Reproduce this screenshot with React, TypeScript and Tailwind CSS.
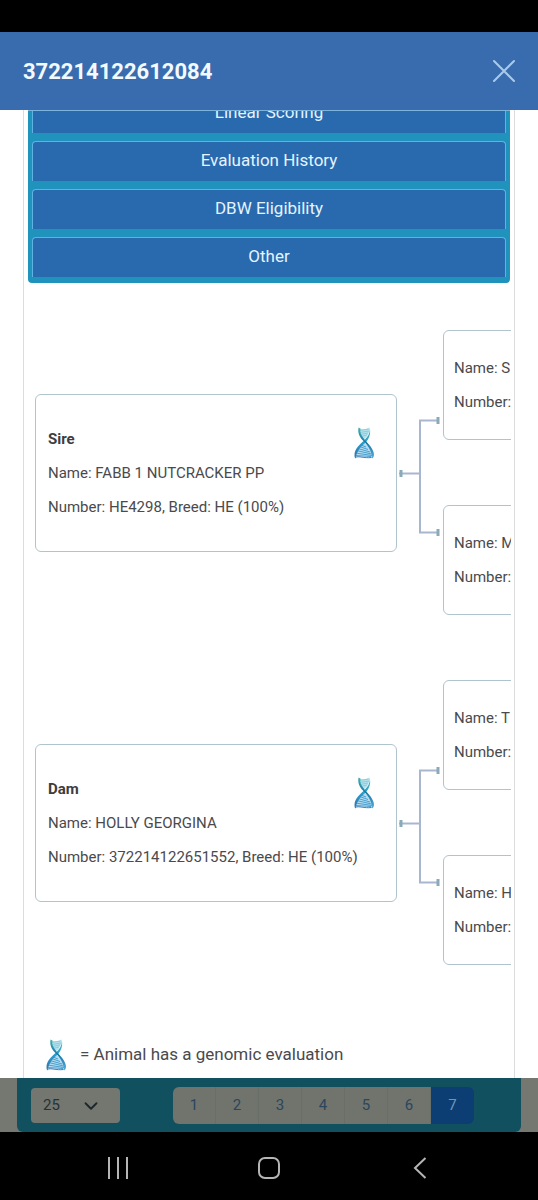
import { ChevronDown } from "lucide-react";

const menuItems = ["Linear Scoring", "Evaluation History", "DBW Eligibility", "Other"];
const pages = [1, 2, 3, 4, 5, 6, 7];

const families = [
  {
    role: "Sire",
    name: "FABB 1 NUTCRACKER PP",
    number: "HE4298, Breed: HE (100%)",
    parents: ["S", "M"],
  },
  {
    role: "Dam",
    name: "HOLLY GEORGINA",
    number: "372214122651552, Breed: HE (100%)",
    parents: ["T", "H"],
  },
];

function DnaIcon() {
  return (
    <svg width="22" height="34" viewBox="0 0 22 34" fill="none" className="shrink-0" aria-hidden="true">
      <defs>
        <linearGradient id="strandA" x1="0" y1="0" x2="0" y2="34" gradientUnits="userSpaceOnUse">
          <stop offset="0" stopColor="#5cc0bd" />
          <stop offset="0.5" stopColor="#2b9ccb" />
          <stop offset="1" stopColor="#2f6ea8" />
        </linearGradient>
        <linearGradient id="strandB" x1="0" y1="0" x2="0" y2="34" gradientUnits="userSpaceOnUse">
          <stop offset="0" stopColor="#4fb5ae" />
          <stop offset="0.5" stopColor="#1677a8" />
          <stop offset="1" stopColor="#5fb4e0" />
        </linearGradient>
      </defs>
      <path d="M6 2.5C5.5 7 7 10.5 11 13.5C15 10 17 6 16.5 1.5C13 3.5 9 4 6 2.5Z" fill="#b5e2ec" />
      <path d="M11 16.5C6 20 3 25 2.5 31.5C8 29.5 13 30 19 31.5C18.5 25 16 20.5 11 16.5Z" fill="#b3dcf1" />
      <path d="M6 4.5 15.5 3M6.5 6.5 16 5M7 8.5 15 7M8 10.5 14 9" stroke="#7cc8dc" strokeWidth="0.8" />
      <path
        d="M8 19 13 21M6.5 20.5 15 23.5M5 22.5 17 26M3.5 24.5 18.5 28M2.5 27 19 29.5M2 29.5 18 30.5"
        stroke="#3f97cb"
        strokeWidth="0.9"
      />
      <path
        d="M16.5 1C17.5 6 15.5 10 11.5 14C6.5 18.5 1.5 23 1.5 29C1.5 31 1.8 32 2.5 32.5C3.5 27 6 22 11.5 17.5C16 13.5 18.5 7.5 16.5 1Z"
        fill="url(#strandA)"
      />
      <path
        d="M5.5 1.5C4.5 7 6.5 11 10 14.5C14.5 19 18.5 24 19 32.5C21 31.5 21.5 29 20.5 26C19 21 14.5 17 11.5 13.5C8 9.5 6.5 6 7.5 2.5Z"
        fill="url(#strandB)"
      />
      <path d="M2 31.5C6 29.5 11 32.5 18.5 31.5" stroke="#3f7fb5" strokeWidth="1" />
    </svg>
  );
}

function Connector() {
  return (
    <svg width="46" height="285" viewBox="0 0 46 285" fill="none" className="shrink-0" aria-hidden="true">
      <path d="M2 143.5H23M41 90.5H23V202.5H41" stroke="#a9b6d0" strokeWidth="2" />
      <path d="M4 140V147M41 87V94M41 199V206" stroke="#8aa9b9" strokeWidth="3" />
    </svg>
  );
}

export default function App() {
  return (
    <div className="flex min-h-screen flex-col bg-white font-['Roboto',sans-serif] text-[15px] text-[#4a4a4d]">
      <div className="h-8 bg-black" />
      <header className="flex h-[78px] items-center justify-between bg-[#396cae] pr-[22px] pl-[23px]">
        <h1 className="text-[22px] font-bold text-[#f2faff]">372214122612084</h1>
        <button type="button" aria-label="Close" className="text-[#a9caec]">
          <svg width="24" height="24" viewBox="0 0 24 24" fill="none" stroke="currentColor" strokeWidth="2" strokeLinecap="round">
            <path d="M2 2 22 22M22 2 2 22" />
          </svg>
        </button>
      </header>

      <main className="mx-[23px] flex-1 border-x border-[#dcdcdc]">
        <nav className="mx-1 flex h-[173px] flex-col justify-end gap-2 overflow-hidden rounded-b-sm border-t border-[#7db4de] bg-[#2093bd] px-1 pb-1.5">
          {menuItems.map((item) => (
            <button
              key={item}
              type="button"
              className="h-10 shrink-0 rounded-t-sm border border-b-0 border-[#5fb2e4] bg-[#2969ae] pb-0.5 text-[17px] text-[#e3f4ff]"
            >
              {item}
            </button>
          ))}
        </nav>

        <section className="mr-[3px] ml-[11px] flex flex-col gap-[65px] overflow-hidden pt-[47px]">
          {families.map((family) => (
            <div key={family.role} className="flex items-center whitespace-nowrap">
              <article className="flex w-[362px] shrink-0 items-start justify-between rounded-md border border-[#afc4cd] py-[27px] pr-[21px] pl-3 leading-[34px]">
                <div>
                  <h2 className="font-bold text-[#3d3d40]">{family.role}</h2>
                  <p>Name: {family.name}</p>
                  <p>Number: {family.number}</p>
                </div>
                <div className="-ml-6 pt-1">
                  <DnaIcon />
                </div>
              </article>
              <Connector />
              <div className="flex flex-col gap-[65px]">
                {family.parents.map((parent) => (
                  <article
                    key={parent}
                    className="w-[362px] rounded-md border border-[#afc4cd] px-2.5 py-5 leading-[34px]"
                  >
                    <p>Name: {parent}</p>
                    <p>Number:</p>
                  </article>
                ))}
              </div>
            </div>
          ))}
        </section>

        <p className="flex items-center gap-[13px] pt-[73px] pb-1.5 pl-[21px] text-[17px]">
          <DnaIcon />
          = Animal has a genomic evaluation
        </p>
      </main>

      <footer className="bg-[#747870] px-[17px]">
        <div className="flex h-[54px] items-center rounded-b-md bg-[#11505f] pl-3.5">
          <div className="relative mr-[53px] w-[89px]">
            <select
              aria-label="Rows per page"
              defaultValue="25"
              className="h-[35px] w-full appearance-none rounded bg-[#73776f] pl-3 text-[#26313a]"
            >
              <option>25</option>
            </select>
            <ChevronDown size={22} className="pointer-events-none absolute top-[7px] right-[18px] text-[#1c262c]" />
          </div>
          <div className="flex overflow-hidden rounded-md">
            {pages.map((page) => (
              <button
                key={page}
                type="button"
                className={
                  page === 7
                    ? "h-[37px] w-[43px] bg-[#0c3d73] text-[#7295b5]"
                    : "h-[37px] w-[43px] border-r border-[#696e68] bg-[#70746d] text-[#2a465d]"
                }
              >
                {page}
              </button>
            ))}
          </div>
        </div>
      </footer>

      <div className="flex h-[68px] items-center justify-between bg-black px-[107px] pb-0 text-[#b5b5b5]">
        <button type="button" aria-label="Recent apps" className="mt-1">
          <svg width="22" height="22" viewBox="0 0 22 22" stroke="currentColor" strokeWidth="2">
            <path d="M2 0V22M11 0V22M20 0V22" />
          </svg>
        </button>
        <button type="button" aria-label="Home" className="mt-1">
          <svg width="22" height="22" viewBox="0 0 22 22" fill="none" stroke="currentColor" strokeWidth="2">
            <rect x="1" y="1" width="20" height="20" rx="6" />
          </svg>
        </button>
        <button type="button" aria-label="Back" className="mt-1">
          <svg width="22" height="22" viewBox="0 0 22 22" fill="none" stroke="currentColor" strokeWidth="2">
            <path d="M16.5 1 6 11 16.5 21" />
          </svg>
        </button>
      </div>
    </div>
  );
}
